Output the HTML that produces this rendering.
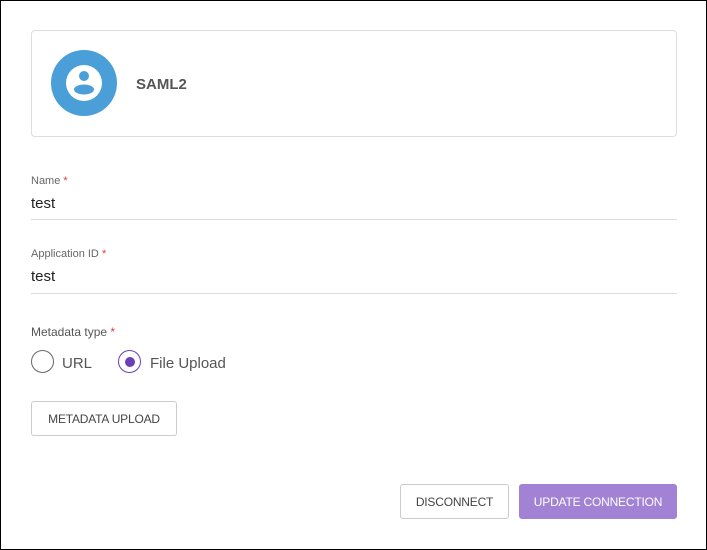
<!DOCTYPE html>
<html><head><style>
*{box-sizing:border-box;margin:0;padding:0}
body{width:707px;height:550px;position:relative;background:#fff;font-family:"Liberation Sans",Arial,sans-serif;overflow:hidden}
.frame{position:absolute;left:0;top:0;width:707px;height:550px;border:1px solid #000}
.a{position:absolute}
.card{left:31px;top:30px;width:646px;height:107px;border:1px solid #ddd;border-radius:4px}
.lbl{font-size:11px;color:#666}
.req{color:#e53935}
.val{font-size:15px;color:#222}
.line{height:1px;background:#ddd;left:31px;width:646px}
.radio{width:23px;height:23px;border-radius:50%;border:1.5px solid #666}
.btn{border:1px solid #ccc;border-radius:3px;font-size:12px;color:#444;display:flex;align-items:center;justify-content:center;letter-spacing:-0.2px}
</style></head><body>
<div class="frame"></div>
<div class="a card"></div>
<svg class="a" style="left:51px;top:50px" width="66" height="66" viewBox="0 0 66 66">
<circle cx="33" cy="33" r="33" fill="#4a9fd8"/>
<circle cx="33" cy="33" r="18" fill="#fff"/>
<circle cx="33" cy="26" r="5" fill="#4a9fd8"/>
<ellipse cx="33" cy="39.5" rx="10" ry="5" fill="#4a9fd8"/>
</svg>
<div class="a" style="left:136px;top:76px;font-size:15px;font-weight:bold;color:#555">SAML2</div>
<div class="a lbl" style="left:31px;top:175px">Name <span class="req">*</span></div>
<div class="a val" style="left:31px;top:195px">test</div>
<div class="a line" style="top:219px"></div>
<div class="a lbl" style="left:31px;top:248px">Application ID <span class="req">*</span></div>
<div class="a val" style="left:31px;top:268px">test</div>
<div class="a line" style="top:293px"></div>
<div class="a" style="left:31px;top:325px;font-size:12px;color:#555">Metadata type <span class="req">*</span></div>
<div class="a radio" style="left:31px;top:350px"></div>
<div class="a" style="left:62px;top:355px;font-size:15px;color:#555">URL</div>
<div class="a radio" style="left:118px;top:350px;border-color:#6a3fb8"></div>
<div class="a" style="left:124.5px;top:356.5px;width:10px;height:10px;border-radius:50%;background:#6a3fb8"></div>
<div class="a" style="left:150px;top:355px;font-size:15px;color:#555">File Upload</div>
<div class="a btn" style="left:31px;top:401px;width:146px;height:35px">METADATA UPLOAD</div>
<div class="a btn" style="left:400px;top:484px;width:109px;height:35px">DISCONNECT</div>
<div class="a btn" style="left:519px;top:484px;width:158px;height:35px;background:#a182d4;border-color:#a182d4;color:#fff">UPDATE CONNECTION</div>
</body></html>
